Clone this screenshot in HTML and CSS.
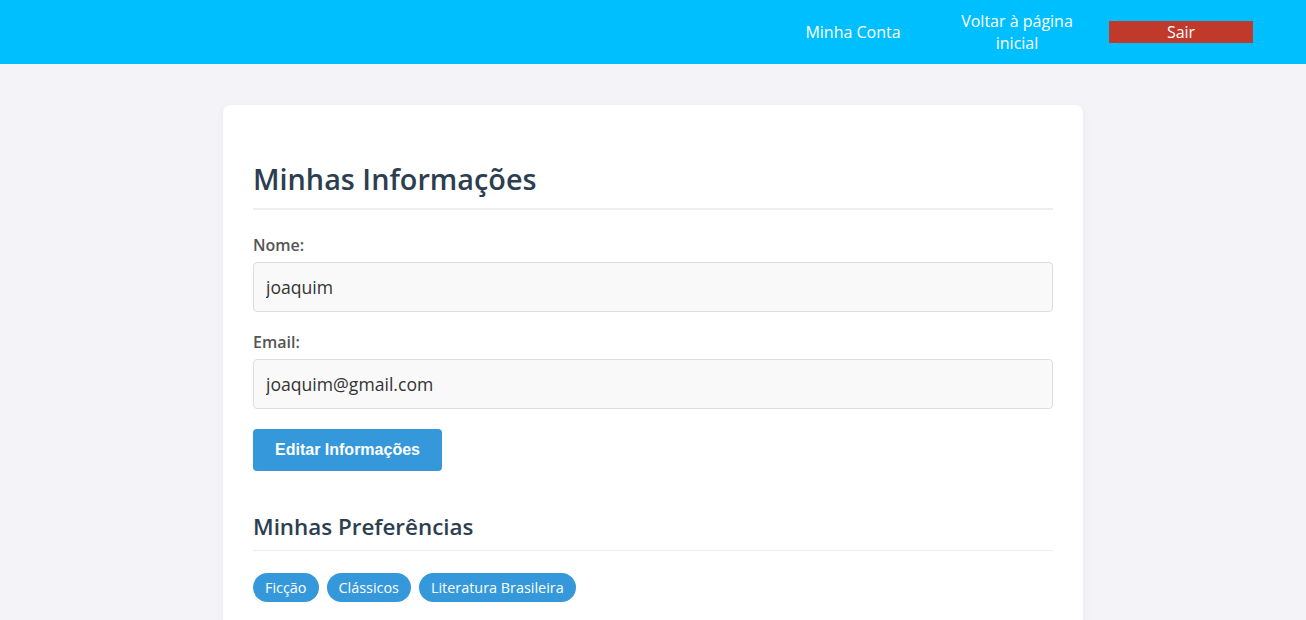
FILE: index.html
```html
<!DOCTYPE html>
<html lang="pt-BR">
<head>
<meta charset="utf-8">
<title>Minha Conta</title>
<link rel="stylesheet" href="styles.css">
</head>
<body>
<header class="topbar">
  <nav class="nav">
    <a class="nav-link" href="#">Minha Conta</a>
    <a class="nav-link" href="#">Voltar à página inicial</a>
    <a class="nav-link nav-logout" href="#">Sair</a>
  </nav>
</header>
<main class="page">
  <section class="card">
    <h2 class="title">Minhas Informações</h2>
    <div class="field">
      <label class="label">Nome:</label>
      <input class="input" type="text" value="joaquim" readonly>
    </div>
    <div class="field">
      <label class="label">Email:</label>
      <input class="input" type="text" value="joaquim@gmail.com" readonly>
    </div>
    <button class="btn">Editar Informações</button>
    <h3 class="subtitle">Minhas Preferências</h3>
    <div class="tags">
      <span class="tag">Ficção</span>
      <span class="tag">Clássicos</span>
      <span class="tag">Literatura Brasileira</span>
    </div>
  </section>
</main>
</body>
</html>
```
FILE: styles.css
```css
* { box-sizing: border-box; }
html, body { margin: 0; padding: 0; }
body {
  background: #f4f4f8;
  font-family: "Open Sans", "Noto Sans", sans-serif;
  color: #333;
}
.topbar {
  background: #00bfff;
  height: 64px;
  display: flex;
  justify-content: flex-end;
  align-items: center;
  padding-right: 53px;
}
.nav {
  display: flex;
  align-items: center;
  gap: 20px;
}
.nav-link {
  width: 144px;
  color: #fff;
  text-decoration: none;
  text-align: center;
  font-size: 16px;
  line-height: 22px;
}
.nav-logout {
  background: #c0392b;
}
.page {
  padding-top: 41px;
  display: flex;
  justify-content: center;
}
.card {
  width: 860px;
  background: #fff;
  border-radius: 8px;
  box-shadow: 0 2px 10px rgba(0,0,0,0.05);
  padding: 54px 30px 40px;
  min-height: 600px;
}
.title {
  margin: 0 0 24px;
  font-size: 28.8px;
  font-weight: 600;
  color: #2c3e50;
  line-height: 40px;
  padding-bottom: 9px;
  border-bottom: 2px solid #eee;
}
.field {
  margin-bottom: 19px;
}
.label {
  display: block;
  font-size: 16px;
  font-weight: 600;
  color: #555;
  line-height: 22px;
  margin-bottom: 6px;
}
.input {
  display: block;
  width: 100%;
  height: 50px;
  padding: 0 12px;
  background: #f9f9f9;
  border: 1px solid #ddd;
  border-radius: 4px;
  font-family: "Open Sans", "Noto Sans", sans-serif;
  font-size: 17.6px;
  color: #333;
  outline: none;
}
.btn {
  display: block;
  width: 189px;
  height: 42px;
  margin-top: 20px;
  background: #3498db;
  color: #fff;
  border: none;
  border-radius: 4px;
  font-family: "Liberation Sans", Arial, sans-serif;
  font-weight: bold;
  font-size: 16px;
}
.subtitle {
  margin: 41px 0 22px;
  font-size: 22.4px;
  font-weight: 600;
  color: #2c3e50;
  line-height: 30px;
  padding-bottom: 8px;
  border-bottom: 1px solid #eee;
}
.tags {
  display: flex;
  gap: 8px;
  flex-wrap: wrap;
}
.tag {
  background: #3498db;
  color: #fff;
  font-size: 14.4px;
  line-height: 29px;
  padding: 0 12px;
  border-radius: 15px;
}
```
